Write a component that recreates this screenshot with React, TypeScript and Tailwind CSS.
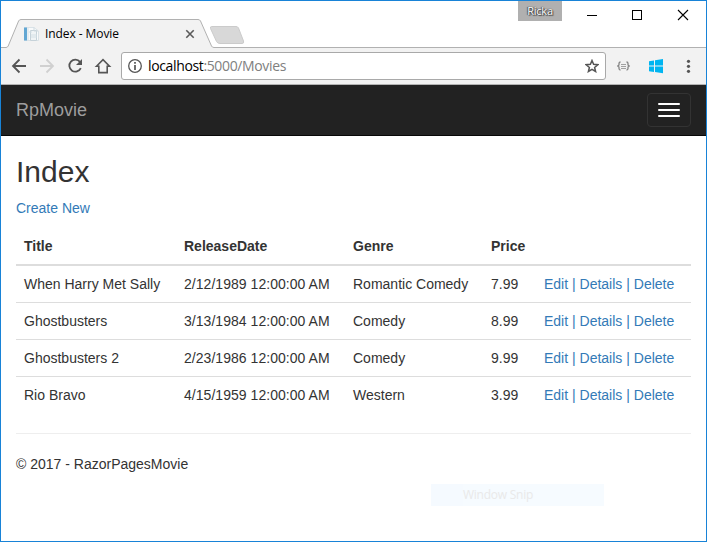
import React from "react";

const movies = [
  { title: "When Harry Met Sally", date: "2/12/1989 12:00:00 AM", genre: "Romantic Comedy", price: "7.99" },
  { title: "Ghostbusters", date: "3/13/1984 12:00:00 AM", genre: "Comedy", price: "8.99" },
  { title: "Ghostbusters 2", date: "2/23/1986 12:00:00 AM", genre: "Comedy", price: "9.99" },
  { title: "Rio Bravo", date: "4/15/1959 12:00:00 AM", genre: "Western", price: "3.99" },
];

function TabStrip() {
  return (
    <div className="relative flex h-[47px] shrink-0">
      <svg className="absolute left-0 top-0" width="705" height="47" fill="none">
        <path d="M0 46.5H5Q6.500 46.500 7.200 45L17.600 20Q18.300 18.500 20 18.500H197Q198.800 18.500 199.500 20L210.500 45Q211.200 46.500 213 46.500H705V47H0Z" fill="#f2f2f2" />
        <path d="M0 46.500H5Q6.500 46.500 7.200 45L17.600 20Q18.300 18.500 20 18.500H197Q198.800 18.500 199.500 20L210.500 45Q211.200 46.500 213 46.500H705" stroke="#b1b1b1" />
        <path d="M210.500 25.500H235Q236.800 25.500 237.500 27L242.500 40Q243.300 42.500 241 42.500H219Q216.500 42.500 215.500 40.500L209.500 27.500Q209 25.500 210.500 25.500Z" fill="#d8d8d8" stroke="#cbcbcb" />
      </svg>
      <div className="relative mt-[24px] ml-[22px] flex h-[18px] w-[172px] items-center font-['Open_Sans','Noto_Sans',sans-serif] text-[12px] text-black">
        <svg width="17" height="16" viewBox="0 0 17 16" fill="none">
          <path d="M1.500 1.500H11L15.500 5V14.500H1.500Z" fill="#f8fafb" stroke="#d9e2e7" />
          <path d="M7.500 4.500H13.500V14.500H7.500Z" fill="#f0f4f6" stroke="#c6d2d9" />
          <path d="M1 1.500H4V14.500H1Z" fill="#62a7d3" />
          <path d="M5 2V14M6 6H9M8 9H14M8 11H14" stroke="#d4e0e6" />
          <path d="M11 1.500V5H15" stroke="#ced9df" />
        </svg>
        <span className="ml-[5px] whitespace-nowrap leading-[18px] tracking-[-0.08px]">Index - Movie</span>
        <svg className="ml-auto" width="10" height="10" viewBox="0 0 10 10">
          <path d="M1.300 1.300L8.700 8.700M8.700 1.300L1.300 8.700" stroke="#5a5a5a" strokeWidth="1.600" />
        </svg>
      </div>
      <div className="relative ml-auto flex items-start">
        <div className="mr-[25px] h-[20px] w-[44px] bg-[#b0b0b0] text-center font-['Open_Sans','Noto_Sans',sans-serif] text-[11px] leading-[20px] tracking-[-0.2px] text-white [text-shadow:0_0_1px_#333,1px_1px_1px_#444,-1px_0_1px_#555]">
          Ricka
        </div>
        <svg className="mt-[8px] mr-[17px]" width="102" height="12" fill="none" stroke="#000" shapeRendering="crispEdges">
          <path d="M0 6.500H10" />
          <rect x="45.500" y="1.500" width="9" height="9" />
          <path d="M91 1L101 11M101 1L91 11" shapeRendering="auto" strokeWidth="1.100" />
        </svg>
      </div>
    </div>
  );
}

function Toolbar() {
  return (
    <div className="flex h-[37px] shrink-0 items-center border-b border-[#b3b3b3] bg-[#f2f2f2]">
      <svg className="ml-[10px] shrink-0" width="102" height="20" fill="none" stroke="#555" strokeWidth="1.800">
        <path d="M15 10H2.500M8.500 3.500L2 10L8.500 16.500" />
        <path d="M29 10H41.500M35.500 3.500L42 10L35.500 16.500" stroke="#d0d0d0" />
        <path d="M69 5.900A6 6 0 1 0 69.800 12.200" />
        <path d="M71 3V9H65Z" fill="#555" stroke="none" />
        <path d="M85.500 10.200L92 3.700L98.500 10.200H96.200V16.600H87.800V10.200Z" strokeWidth="1.600" />
      </svg>
      <div className="ml-[8px] flex h-[28px] w-[485px] shrink-0 items-center rounded-[3px] border border-[#a9a9a9] bg-white font-['Open_Sans','Noto_Sans',sans-serif] text-[14px]">
        <svg className="ml-[6px]" width="14" height="14" viewBox="0 0 14 14" fill="none" stroke="#555">
          <circle cx="7" cy="7" r="6.300" strokeWidth="1.300" />
          <path d="M7 6V11M7 3V4.700" strokeWidth="1.700" />
        </svg>
        <span className="ml-[6px] whitespace-nowrap tracking-[-0.36px] text-[#808080]"><span className="text-black">localhost</span>:5000/Movies</span>
        <svg className="ml-auto mr-[6px]" width="14" height="14" viewBox="0 0 14 14" fill="none" stroke="#555" strokeWidth="1.500">
          <path d="M7 1.500L8.600 5.300L12.800 5.700L9.600 8.400L10.600 12.500L7 10.300L3.400 12.500L4.400 8.400L1.200 5.700L5.400 5.300Z" />
        </svg>
      </div>
      <svg className="ml-[11px]" width="76" height="16" fill="none">
        <path d="M3.500 4Q2 4 2 5.500V7L0.800 8L2 9V10.500Q2 12 3.500 12M9.500 4Q11 4 11 5.500V7L12.200 8L11 9V10.500Q11 12 9.500 12" stroke="#858585" strokeWidth="1.300" />
        <path d="M4 6.500H9M4 8.500H9M4 10.500H9" stroke="#a2a2a2" />
        <path d="M32 3.200L37 2.400V7.600H32ZM38 2.200L46 1V7.600H38ZM32 8.600H37V14L32 13.300ZM38 8.600H46V15.200L38 14.100Z" fill="#00b5f1" />
        <g fill="#555"><circle cx="71.500" cy="3.300" r="1.600" /><circle cx="71.500" cy="8.300" r="1.600" /><circle cx="71.500" cy="13.300" r="1.600" /></g>
      </svg>
    </div>
  );
}

function RowActions() {
  return (
    <>
      <a>Edit</a> <span>|</span> <a>Details</a> <span>|</span> <a>Delete</a>
    </>
  );
}

export default function App() {
  return (
    <div className="flex h-[542px] w-[707px] flex-col overflow-hidden border border-[#1883d7] bg-white font-['Liberation_Sans',Arial,sans-serif] text-[14px] leading-[20px] text-[#333]">
      <TabStrip />
      <Toolbar />
      <nav className="flex h-[51px] shrink-0 items-center justify-between border-b border-[#080808] bg-[#222] px-[15px]">
        <span className="text-[18px] text-[#9d9d9d]">RpMovie</span>
        <button className="flex h-[34px] w-[44px] flex-col items-center justify-center gap-[4px] rounded-[4px] border border-[#333]">
          <span className="h-[2px] w-[22px] rounded-[1px] bg-white" />
          <span className="h-[2px] w-[22px] rounded-[1px] bg-white" />
          <span className="h-[2px] w-[22px] rounded-[1px] bg-white" />
        </button>
      </nav>
      <main className="px-[15px] pt-[19px]">
        <h2 className="text-[30px] leading-[33px]">Index</h2>
        <p className="mt-[10px] text-[#337ab7]">Create New</p>
        <div className="mt-[10px]">
          <div className="grid h-[38px] grid-cols-[160px_169px_138px_53px_155px] border-b-2 border-[#ddd] pt-[8px] font-bold [&>div]:pl-[8px]">
            <div>Title</div>
            <div>ReleaseDate</div>
            <div>Genre</div>
            <div>Price</div>
          </div>
          {movies.map((m) => (
            <div
              key={m.title}
              className="grid h-[37px] grid-cols-[160px_169px_138px_53px_155px] border-b border-[#ddd] pt-[8px] whitespace-nowrap last:h-[36px] last:border-b-0 [&>div]:pl-[8px]"
            >
              <div>{m.title}</div>
              <div className="tracking-[0.04px]">{m.date}</div>
              <div>{m.genre}</div>
              <div>{m.price}</div>
              <div className="text-[#337ab7]"><RowActions /></div>
            </div>
          ))}
        </div>
        <hr className="mt-[20px] border-[#eee]" />
        <footer className="mt-[20px]">© 2017 - RazorPagesMovie</footer>
      </main>
      <div className="mt-[10px] ml-[430px] flex h-[22px] w-[173px] bg-[#f6fbff] font-['Open_Sans','Noto_Sans',sans-serif] text-[12px] leading-[21px] tracking-[-0.25px] text-[#e9e9e9]">
        <span className="w-[32px] bg-[#f5faff]" />
        Window Snip
      </div>
    </div>
  );
}
